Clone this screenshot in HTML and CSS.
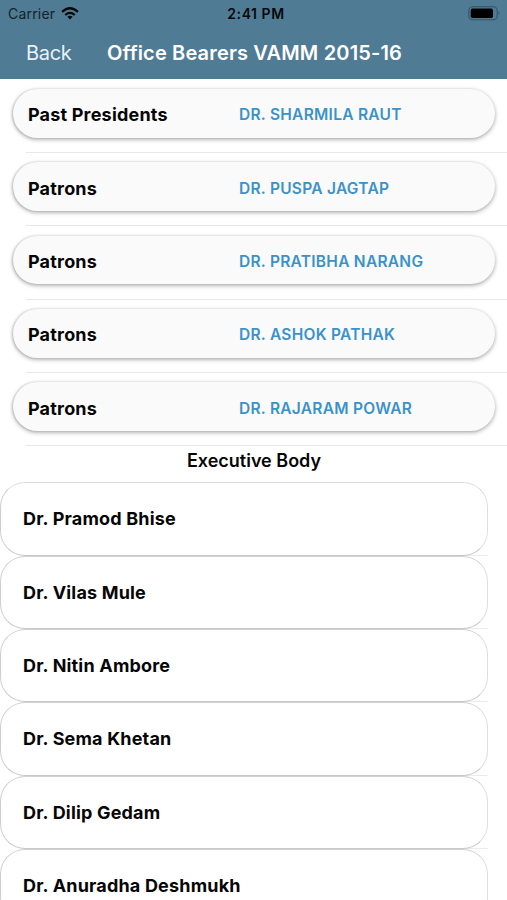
FILE: index.html
```html
<!DOCTYPE html>
<html lang="en">
<head>
<meta charset="utf-8">
<title>Office Bearers VAMM 2015-16</title>
<link rel="stylesheet" href="styles.css">
</head>
<body>
<header class="header">
  <div class="status">
    <div class="carrier"><span>Carrier</span>
      <svg class="wifi" viewBox="0 0 18 13" width="18" height="13"><g fill="none" stroke="#06090b" stroke-width="2.2"><path d="M1.1 4.9Q9 -2.4 16.9 4.9"/><path d="M4.2 8Q9 3.7 13.8 8"/></g><path d="M6.4 9.8Q9 7.7 11.6 9.8L9 12.4Z" fill="#06090b"/></svg>
    </div>
    <span class="time">2:41 PM</span>
    <svg class="battery" viewBox="0 0 33 15" width="33" height="15"><rect x=".8" y=".8" width="28.4" height="13" rx="3.8" fill="none" stroke="#345566" stroke-width="1.1"/><rect x="2.7" y="2.6" width="22.3" height="9.4" rx="1.8" fill="#000"/><path d="M30.6 5.3Q32.5 7.2 30.6 9.2Z" fill="#345566"/></svg>
  </div>
  <nav class="nav"><span class="back">Back</span><h1 class="title">Office Bearers VAMM 2015-16</h1></nav>
</header>
<main>
  <ul class="bearers">
    <li class="row"><div class="pill"><span class="role">Past Presidents</span><span class="name">DR. SHARMILA RAUT</span></div></li>
    <li class="row"><div class="pill"><span class="role">Patrons</span><span class="name">DR. PUSPA JAGTAP</span></div></li>
    <li class="row"><div class="pill"><span class="role">Patrons</span><span class="name">DR. PRATIBHA NARANG</span></div></li>
    <li class="row"><div class="pill"><span class="role">Patrons</span><span class="name">DR. ASHOK PATHAK</span></div></li>
    <li class="row"><div class="pill"><span class="role">Patrons</span><span class="name">DR. RAJARAM POWAR</span></div></li>
  </ul>
  <h2 class="section">Executive Body</h2>
  <ul class="members">
    <li class="member"><div class="card">Dr. Pramod Bhise</div></li>
    <li class="member"><div class="card">Dr. Vilas Mule</div></li>
    <li class="member"><div class="card">Dr. Nitin Ambore</div></li>
    <li class="member"><div class="card">Dr. Sema Khetan</div></li>
    <li class="member"><div class="card">Dr. Dilip Gedam</div></li>
    <li class="member"><div class="card">Dr. Anuradha Deshmukh</div></li>
  </ul>
</main>
</body>
</html>
```
FILE: styles.css
```css
* { box-sizing: border-box; }
body { margin: 0; height: 900px; overflow: hidden; background: #fff; color: #060606; font-family: Inter, "Liberation Sans", sans-serif; }
ul { margin: 0; padding: 0; list-style: none; }
.header { height: 79px; background: #4f7b95; }
.status { height: 27px; display: grid; grid-template-columns: 1fr auto 1fr; align-items: center; padding: 0 6px 0 8px; color: #06090b; font-size: 14px; line-height: 27px; }
.carrier { display: flex; align-items: center; gap: 6px; letter-spacing: .2px; color: #14222a; }
.time { font-weight: 600; letter-spacing: .55px; margin-left: 3px; }
.battery { justify-self: end; }
.nav { height: 52px; display: flex; align-items: center; color: #fff; line-height: 50px; }
.back { width: 81px; margin-left: 26px; font-size: 20px; letter-spacing: -.3px; color: #e9f1f5; }
.title { margin: 0; font-size: 20px; font-weight: 600; letter-spacing: .16px; white-space: nowrap; }
.row { position: relative; height: 73.33px; padding: 10px 12px 0 13px; }
.row::after { content: ""; position: absolute; left: 26px; right: 0; bottom: -.6px; height: 1px; background: #e8e8e8; }
.pill { height: 48.7px; border-radius: 25px; background: #fafafa; box-shadow: 0 1.5px 4px rgba(0,0,0,.34), -1px 0 2px rgba(0,0,0,.12); display: grid; grid-template-columns: 211px 1fr; align-items: center; padding: 3.3px 0 0 15px; }
.role { font-size: 18px; font-weight: 700; letter-spacing: .19px; }
.name { font-size: 15.5px; font-weight: 600; letter-spacing: .27px; color: #3b92ca; }
.section { margin: 0; height: 36.6px; padding: 4px 0 0 1px; line-height: 22px; font-size: 18px; font-weight: 600; text-align: center; }
.member { width: 488px; height: 73.33px; background: linear-gradient(#ececec, #ececec) 26px 100% / 462px 1px no-repeat; }
.card { height: 73.33px; border: 1px solid #dedede; border-bottom-color: #c8c8c8; border-left-color: #cfcfcf; border-radius: 25px; padding-left: 22px; font-size: 18px; font-weight: 700; letter-spacing: .18px; line-height: 72.8px; }
.member + .member .card { border-top-color: #d2d2d2; }
```
